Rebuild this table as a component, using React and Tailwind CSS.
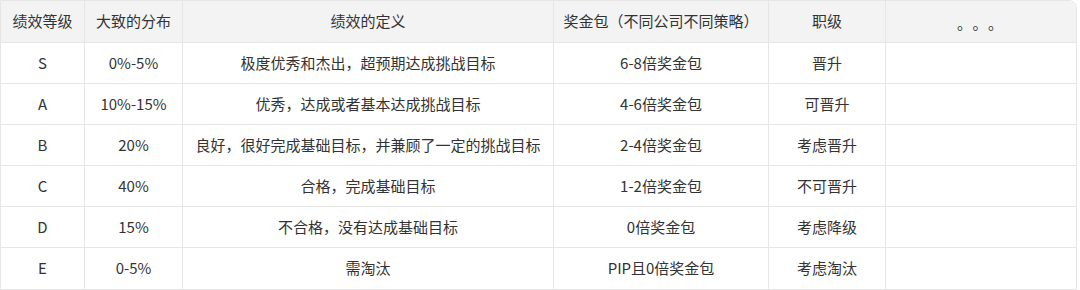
const headers = ['绩效等级', '大致的分布', '绩效的定义', '奖金包（不同公司不同策略）', '职级', '。。。'];

const rows = [
  ['S', '0%-5%', '极度优秀和杰出，超预期达成挑战目标', '6-8倍奖金包', '晋升', ''],
  ['A', '10%-15%', '优秀，达成或者基本达成挑战目标', '4-6倍奖金包', '可晋升', ''],
  ['B', '20%', '良好，很好完成基础目标，并兼顾了一定的挑战目标', '2-4倍奖金包', '考虑晋升', ''],
  ['C', '40%', '合格，完成基础目标', '1-2倍奖金包', '不可晋升', ''],
  ['D', '15%', '不合格，没有达成基础目标', '0倍奖金包', '考虑降级', ''],
  ['E', '0-5%', '需淘汰', 'PIP且0倍奖金包', '考虑淘汰', ''],
];

export default function App() {
  return (
    <div
      className="w-[1080px] h-[290px] bg-white text-[#333333] text-[15px]"
      style={{ fontFamily: '"Noto Sans CJK SC", "Noto Sans", sans-serif' }}
    >
      <div className="w-[1077px] grid grid-cols-[84px_98px_371px_215px_117px_1fr] border border-[#e6e6e6] rounded-tr-lg overflow-hidden">
        {headers.map((h, i) => (
          <div
            key={h}
            className={`h-[42px] flex items-center justify-center bg-[#f3f3f3] border-b border-[#e6e6e6] ${i < 5 ? 'border-r' : ''}`}
          >
            {i === 5 ? <span className="tracking-[8px] pl-[6px] pt-[3px]">{h}</span> : h}
          </div>
        ))}
        {rows.map((row, r) =>
          row.map((cell, i) => (
            <div
              key={`${r}-${i}`}
              className={`h-[41px] flex items-center justify-center whitespace-nowrap ${r < rows.length - 1 ? 'border-b' : ''} ${i < 5 ? 'border-r' : ''} border-[#e6e6e6]`}
            >
              {cell}
            </div>
          ))
        )}
      </div>
    </div>
  );
}
